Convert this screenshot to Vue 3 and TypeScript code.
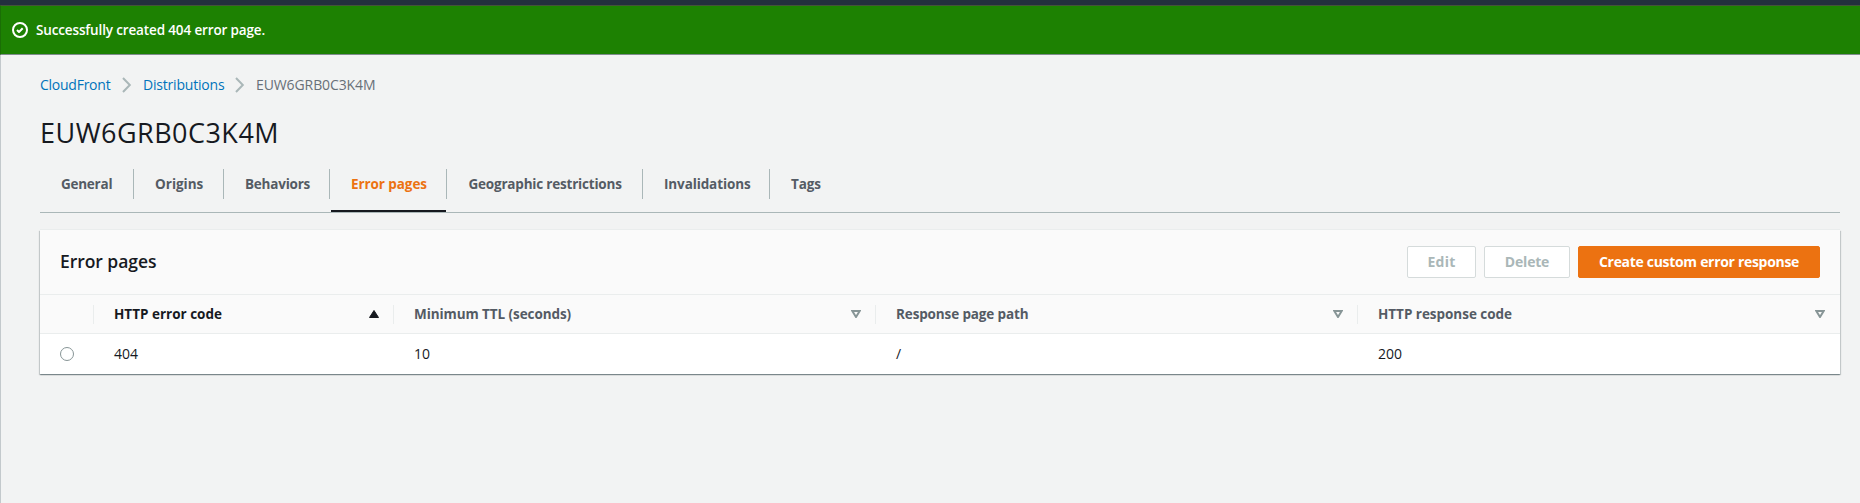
<script setup lang="ts">
interface Tab { id: string; label: string }
interface Column { id: string; label: string; value: string; sorted?: boolean }

const tabs: Tab[] = [
  { id: 'general', label: 'General' },
  { id: 'origins', label: 'Origins' },
  { id: 'behaviors', label: 'Behaviors' },
  { id: 'errors', label: 'Error pages' },
  { id: 'geo', label: 'Geographic restrictions' },
  { id: 'invalidations', label: 'Invalidations' },
  { id: 'tags', label: 'Tags' },
]
const activeTab = 'errors'

const columns: Column[] = [
  { id: 'code', label: 'HTTP error code', value: '404', sorted: true },
  { id: 'ttl', label: 'Minimum TTL (seconds)', value: '10' },
  { id: 'path', label: 'Response page path', value: '/' },
  { id: 'response', label: 'HTTP response code', value: '200' },
]
</script>

<template>
  <div class="page">
    <div class="topbar"></div>
    <div class="flash" role="status">
      <svg class="check" width="16" height="16" viewBox="0 0 16 16" fill="none" stroke="#fff" stroke-width="2">
        <circle cx="8" cy="8" r="7" />
        <path d="M5 8l2 2 3.7-3.7" stroke-linejoin="round" />
      </svg>
      <span class="flash-text">Successfully created 404 error page.</span>
    </div>

    <main class="content">
      <nav class="crumbs">
        <a class="crumb cloudfront">CloudFront</a>
        <svg class="chev" width="10" height="16" viewBox="0 0 10 16"><path d="M1 1l6.8 7L1 15" /></svg>
        <a class="crumb distributions">Distributions</a>
        <svg class="chev" width="10" height="16" viewBox="0 0 10 16"><path d="M1 1l6.8 7L1 15" /></svg>
        <span class="current">EUW6GRB0C3K4M</span>
      </nav>

      <h1>EUW6GRB0C3K4M</h1>

      <div class="tabs">
        <div v-for="t in tabs" :key="t.id" :class="['tab', t.id, { active: t.id === activeTab }]">
          <span>{{ t.label }}</span>
        </div>
      </div>

      <section class="card">
        <header>
          <h2>Error pages</h2>
          <div class="actions">
            <button class="edit" disabled>Edit</button>
            <button class="delete" disabled>Delete</button>
            <button class="primary">Create custom error response</button>
          </div>
        </header>
        <div class="row head">
          <div class="cell"></div>
          <div v-for="c in columns" :key="c.id" :class="['cell', c.id, { sorted: c.sorted }]">
            <span>{{ c.label }}</span>
            <svg v-if="c.sorted" width="10" height="8" viewBox="0 0 10 8"><path d="M5 .5L9.5 7.5H.5z" fill="#16191f" stroke="#16191f" stroke-linejoin="round" /></svg>
            <svg v-else width="10" height="8" viewBox="0 0 10 8"><path d="M1.3 1h7.4L5 7z" fill="none" stroke="#879596" stroke-width="2" /></svg>
          </div>
        </div>
        <div class="row body">
          <div class="cell"><span class="radio"></span></div>
          <div v-for="c in columns" :key="c.id" class="cell">{{ c.value }}</div>
        </div>
      </section>
    </main>
  </div>
</template>

<style>
body { background: #f2f3f3; }
</style>

<style scoped>
.page {
  box-sizing: border-box;
  height: 503px;
  overflow: hidden;
  background: #f2f3f3;
  color: #16191f;
  font: 14px/22px "Open Sans", "Noto Sans", sans-serif;
  white-space: nowrap;
}
.topbar { height: 5px; background: #232f3e; }
.flash {
  box-sizing: border-box;
  display: flex;
  align-items: center;
  gap: 8px;
  height: 50px;
  padding: 0 12px;
  border-top: 1px solid #44523a;
  border-bottom: 1px solid #7f8c8d;
  border-left: 1px solid #1a6e05;
  background: #1d8102;
  color: #fff;
}
.check { margin-left: -1px; }
.flash-text { font-size: 13.5px; font-weight: 600; letter-spacing: -0.14px; }
.content {
  box-sizing: border-box;
  height: 448px;
  padding: 19px 20px 0 39px;
  border-left: 1px solid #c3c9cc;
}
.crumbs { display: flex; align-items: center; height: 22px; color: #687078; }
.crumb { color: #0073bb; }
.cloudfront { width: 82px; letter-spacing: -0.25px; }
.distributions { width: 92px; margin-left: 11px; letter-spacing: -0.2px; }
.current { margin-left: 11px; letter-spacing: -0.1px; }
.chev { fill: none; stroke: #aab7b8; stroke-width: 2; }
h1 {
  height: 36px;
  margin: 19px 0 0;
  font: 400 27px/36px "Open Sans", "Noto Sans", sans-serif;
  letter-spacing: 0.47px;
}
.tabs {
  box-sizing: border-box;
  display: flex;
  height: 62px;
  padding-top: 18px;
  border-bottom: 1px solid #aab7b8;
}
.tab {
  box-sizing: border-box;
  height: 43px;
  color: #545b64;
  font-size: 13.5px;
  font-weight: 700;
}
.tab span {
  box-sizing: border-box;
  display: block;
  height: 30px;
  padding-left: 21px;
  border-right: 1px solid #aab7b8;
  line-height: 31px;
}
.tab.active { color: #ec7211; }
.tab.active::after {
  content: "";
  display: block;
  height: 2px;
  margin: 11px 1px 0;
  background: #16191f;
}
.general { width: 94px; letter-spacing: -0.25px; }
.origins { width: 90px; letter-spacing: 0; }
.behaviors { width: 106px; letter-spacing: -0.22px; }
.errors { width: 117px; letter-spacing: -0.08px; }
.geo { width: 196px; letter-spacing: -0.2px; }
.geo span { padding-left: 21.5px; }
.invalidations { width: 127px; letter-spacing: -0.12px; }
.tags { letter-spacing: -0.1px; }
.tags span { border: 0; }
.card {
  height: 144px;
  margin-top: 17px;
  background: #fff;
  box-shadow: 0 1px 1px 0 rgba(0, 28, 36, 0.3), 1px 1px 1px 0 rgba(0, 28, 36, 0.15), -1px 1px 1px 0 rgba(0, 28, 36, 0.15), 0 -1px 0 0 #eaeded;
}
header {
  box-sizing: border-box;
  display: flex;
  justify-content: space-between;
  height: 64px;
  padding: 16px 20px 0;
  background: #fafafa;
}
h2 { margin: 0; font-size: 17.5px; font-weight: 600; line-height: 30px; letter-spacing: -0.05px; }
.actions { display: flex; gap: 8px; }
button {
  box-sizing: border-box;
  height: 32px;
  padding: 0;
  border: 1px solid #d5dbdb;
  border-radius: 2px;
  background: #fff;
  color: #aab7b8;
  font: 700 14px/30px "Open Sans", "Noto Sans", sans-serif;
}
.edit { width: 69px; letter-spacing: 0.3px; }
.delete { width: 86px; letter-spacing: -0.2px; }
.primary { width: 242px; border-color: #ec7211; background: #ec7211; color: #fff; letter-spacing: -0.31px; }
.row { display: grid; grid-template-columns: 54px 300px 482px 482px 482px; }
.head {
  box-sizing: border-box;
  height: 40px;
  align-items: center;
  border-top: 1px solid #eaeded;
  border-bottom: 1px solid #eaeded;
  background: #fafafa;
  color: #545b64;
  font-size: 13.5px;
  font-weight: 700;
}
.cell { box-sizing: border-box; padding-left: 20px; }
.head .cell {
  display: flex;
  align-items: center;
  justify-content: space-between;
  height: 19px;
  padding-right: 14px;
  border-right: 1px solid #eaeded;
}
.head .cell:last-child { border: 0; padding-right: 15px; }
.head .sorted { color: #16191f; }
.code { letter-spacing: 0; }
.ttl { letter-spacing: -0.08px; }
.path { letter-spacing: -0.13px; }
.response { letter-spacing: -0.03px; }
.body { height: 40px; align-items: center; }
.radio {
  box-sizing: border-box;
  display: block;
  width: 14px;
  height: 14px;
  border: 1px solid #879596;
  border-radius: 50%;
}
</style>
